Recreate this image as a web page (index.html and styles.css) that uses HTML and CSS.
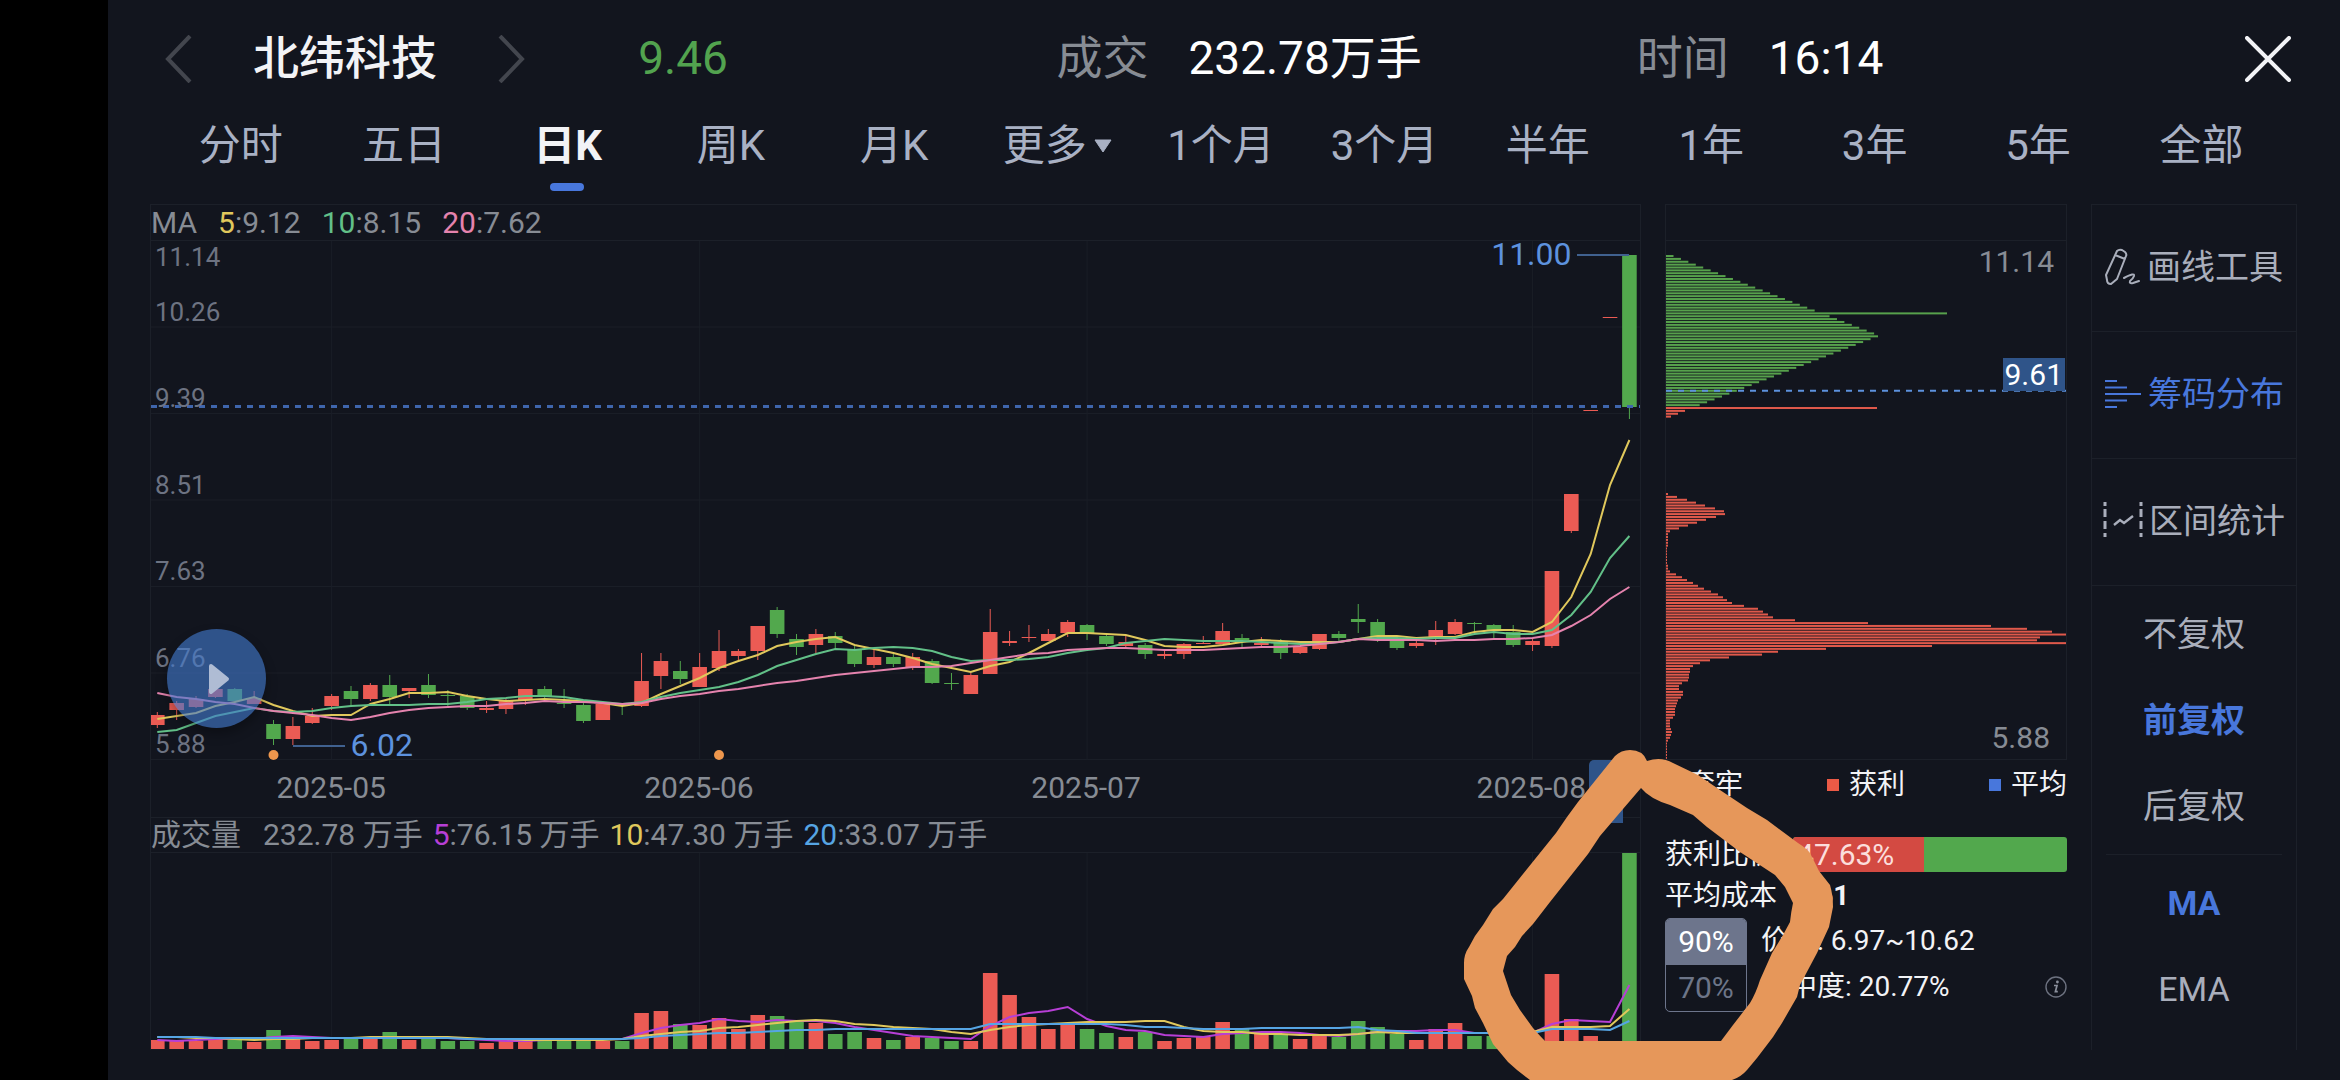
FILE: index.html
```html
<!DOCTYPE html>
<html lang="zh-CN">
<head>
  <meta charset="UTF-8">
  <title>北纬科技 日K</title>
  <link rel="stylesheet" href="styles.css">
</head>
<body>

<div class="app">
  <header class="topbar">
    <div class="stock">
      <button class="icon-btn" aria-label="上一只">
        <svg width="28" height="48" viewBox="0 0 28 48"><path d="M25 1 L3 24 L25 47" fill="none" stroke="#43464e" stroke-width="4"/></svg>
      </button>
      <h1>北纬科技</h1>
      <button class="icon-btn" aria-label="下一只">
        <svg width="28" height="48" viewBox="0 0 28 48"><path d="M3 1 L25 24 L3 47" fill="none" stroke="#43464e" stroke-width="4"/></svg>
      </button>
    </div>
    <div class="price">9.46</div>
    <div class="stat"><span>成交</span><b>232.78万手</b></div>
    <div class="stat"><span>时间</span><b>16:14</b></div>
    <button class="icon-btn" aria-label="关闭">
      <svg width="46" height="46" viewBox="0 0 46 46"><path d="M2 2 L44 44 M44 2 L2 44" fill="none" stroke="#f2f3f6" stroke-width="4" stroke-linecap="round"/></svg>
    </button>
  </header>

  <nav class="tabs">
    <button>分时</button>
    <button>五日</button>
    <button class="active">日K</button>
    <button>周K</button>
    <button>月K</button>
    <button>更多<svg width="20" height="14" viewBox="0 0 20 14"><path d="M2 1 H18 L10 13 Z" fill="#a9b1c4" stroke="#a9b1c4" stroke-linejoin="round"/></svg></button>
    <button>1个月</button>
    <button>3个月</button>
    <button>半年</button>
    <button>1年</button>
    <button>3年</button>
    <button>5年</button>
    <button>全部</button>
  </nav>

  <main class="workspace">
    <section class="chart">
      <div class="legend ma-legend">
        <span>MA</span>
        <span><i class="yellow">5</i>:9.12</span>
        <span><i class="green">10</i>:8.15</span>
        <span><i class="pink">20</i>:7.62</span>
      </div>
      <div class="plot">
        <svg id="kline" viewBox="0 0 1489 519" preserveAspectRatio="none"></svg>
        <div class="axis">
          <div><span>11.14</span><span>10.26</span></div>
          <div><span>9.39</span></div>
          <div><span>8.51</span></div>
          <div><span>7.63</span></div>
          <div><span>6.76</span></div>
          <div><span>5.88</span></div>
        </div>
        <span class="mark mark-high">11.00</span>
        <span class="mark mark-low">6.02</span>
        <button class="play" aria-label="播放">
          <svg width="22" height="32" viewBox="0 0 22 32"><path d="M3 3 L19 16 L3 29 Z" fill="#afbcd4" stroke="#afbcd4" stroke-width="4" stroke-linejoin="round"/></svg>
        </button>
      </div>
      <div class="dates">
        <span style="left: 12.1%">2025-05</span>
        <span style="left: 36.8%">2025-06</span>
        <span style="left: 62.8%">2025-07</span>
        <span style="left: 92.7%">2025-08</span>
        <div class="date-flag"></div>
      </div>
      <div class="legend vol-legend">
        <span class="vol-name">成交量</span>
        <span>232.78 万手</span>
        <span><i class="purple">5</i>:76.15 万手</span>
        <span><i class="yellow">10</i>:47.30 万手</span>
        <span><i class="sky">20</i>:33.07 万手</span>
      </div>
      <div class="plot vol-plot">
        <svg id="volume" viewBox="0 0 1489 196" preserveAspectRatio="none"></svg>
      </div>
    </section>

    <section class="chips">
      <div class="chip-box">
        <div class="chip-plot">
          <svg id="chip" viewBox="0 0 400 517" preserveAspectRatio="none"></svg>
          <span class="chip-top">11.14</span>
          <span class="chip-avg">9.61</span>
          <span class="chip-bottom">5.88</span>
        </div>
      </div>
      <div class="chip-legend">
        <span><i class="sw-green"></i>套牢</span>
        <span><i class="sw-red"></i>获利</span>
        <span><i class="sw-blue"></i>平均</span>
      </div>
      <div class="row profit">
        <span>获利比例</span>
        <div class="bar"><div class="bar-red" style="width: 47.63%">47.63%</div></div>
      </div>
      <div class="row"><span>平均成本</span><b>9.61</b></div>
      <div class="range">
        <div class="range-tabs">
          <button class="active">90%</button>
          <button>70%</button>
        </div>
        <div class="range-info">
          <p>价格: 6.97~10.62</p>
          <p>集中度: 20.77%
            <svg width="22" height="22" viewBox="0 0 22 22"><circle cx="11" cy="11" r="10" fill="none" stroke="#6d7280" stroke-width="1.4"/><circle cx="12.4" cy="6" r="1.4" fill="#8b909c"/><path d="M9 9.5 H12 L10.4 15.6 H12.8" fill="none" stroke="#8b909c" stroke-width="1.7"/></svg>
          </p>
        </div>
      </div>
    </section>

    <aside class="side">
      <button class="tool">
        <svg width="36" height="38" viewBox="0 0 36 38" fill="none" stroke="#a9aebb" stroke-width="2" stroke-linejoin="round" stroke-linecap="round"><path d="M12 3 Q14 1 17 2 L20 4 Q22 6 21 8 L12 31 L6 36 Q2 36 2 32 L1 27 Z M10 7 L20 11"/><path d="M19 30 Q30 24 29 28 Q28 31 25 33 Q24 36 28 35 L34 33"/></svg>
        画线工具
      </button>
      <button class="tool active">
        <svg width="38" height="30" viewBox="0 0 38 30" stroke="#4877dc" stroke-width="2"><path d="M1 2 H13 M1 8.5 H23 M1 15 H37 M1 21.5 H23 M1 28 H13"/></svg>
        筹码分布
      </button>
      <button class="tool">
        <svg width="40" height="38" viewBox="0 0 40 38" fill="none" stroke="#a9aebb" stroke-width="2"><path d="M2 0 V38 M38 0 V38" stroke-width="3" stroke-dasharray="4 3 8 4 8 4 4 3"/><path d="M11 23 L17 18 L21 21 L30 14" stroke-width="2.4"/></svg>
        区间统计
      </button>
      <div class="options">
        <button>不复权</button>
        <button class="active">前复权</button>
        <button>后复权</button>
      </div>
      <div class="options">
        <button class="active">MA</button>
        <button>EMA</button>
      </div>
    </aside>
  </main>

  <svg class="scribble" viewBox="1464 750 370 330">
    <path fill="#e6975a" fill-rule="evenodd" d="M1630 750 Q1621 750 1615 756 L1578 802 L1567 817 L1556 833 L1503 899 L1493 909 L1483 925 L1475 936 L1469 947 Q1464 954 1464 963 L1464 979 L1472 996 L1475 1008 L1483 1023 L1493 1044 L1508 1062 L1517 1070 L1530 1080 H1732 Q1741 1077 1747 1070 L1757 1058 L1773 1037 L1782 1023 L1797 997 L1800 985 L1817 953 L1829 927 L1833 907 Q1833 895 1830 885 L1819 871 L1810 853 Q1806 848 1798 843 L1767 820 L1747 808 L1720 790 L1698 775 L1673 763 Q1661 756 1647 761 Q1643 750 1630 750 Z
    M1641 788 L1623 809 L1600 836 L1588 854 L1550 902 L1533 924 L1522 936 L1515 947 L1507 956 L1503 971 L1507 983 L1511 995 L1520 1010 L1533 1028 Q1540 1036 1545 1041 H1721 L1733 1025 L1750 1003 Q1756 993 1760 980 L1772 953 L1783 935 L1790 922 Q1791 912 1793 903 L1785 887 L1775 875 L1740 852 L1707 827 L1693 815 L1670 805 Q1650 799 1641 788 Z"/>
  </svg>
</div>

<script src="chart.js"></script>
</body>
</html>
```

FILE: styles.css
```css
* {
  box-sizing: border-box;
}

body {
  margin: 0;
  background: #12151e;
  color: #f2f3f6;
  font-family: Roboto, "Noto Sans CJK SC", sans-serif;
  font-size: 28px;
  line-height: 1.2;
}

button {
  border: none;
  padding: 0;
  background: none;
  color: inherit;
  font: inherit;
  cursor: pointer;
}

svg {
  display: block;
}

i {
  font-style: normal;
}

.app {
  position: relative;
  min-height: 100vh;
  border-left: 108px solid #000;
  overflow: hidden;
}

/* top bar */
.topbar {
  display: grid;
  grid-template-columns: 473fr 418fr 580fr 608fr auto;
  align-items: center;
  height: 104px;
  padding: 14px 49px 0 57px;
  font-size: 46px;
}

.stock {
  display: flex;
  align-items: center;
  gap: 60px;
}

.stock h1 {
  margin: 0;
  font-size: 46px;
  font-weight: 500;
}

.price {
  color: #52a34f;
}

.stat {
  display: flex;
  gap: 40px;
  color: #878c94;
}

.stat b {
  color: #fff;
  font-weight: 400;
}

/* period tabs */
.tabs {
  display: flex;
  height: 84px;
  margin-bottom: 4px;
  padding: 0 57px 0 51px;
  color: #a9b1c4;
  font-size: 42px;
}

.tabs button {
  position: relative;
  display: flex;
  flex: 1;
  justify-content: center;
  align-items: center;
  gap: 6px;
}

.tabs .active {
  color: #f2f3f6;
  font-weight: 700;
}

.tabs .active::after {
  content: "";
  position: absolute;
  bottom: -3px;
  width: 34px;
  height: 8px;
  border-radius: 4px;
  background: #4877dc;
}

/* workspace */
.workspace {
  display: grid;
  grid-template-columns: 1491fr 402fr 206fr;
  gap: 24px;
  padding: 12px 43px 29px 42px;
}

.chart,
.chip-box,
.side {
  border: 1px solid #1c2029;
}

.chart {
  border-bottom-color: #161a22;
}

.legend {
  display: flex;
  align-items: center;
  height: 36px;
  color: #878c94;
  font-size: 30px;
  line-height: 36px;
  border-bottom: 1px solid #1c2029;
}

.ma-legend {
  gap: 21px;
}

.vol-legend {
  gap: 10px;
  border-top: 1px solid #1c2029;
}

.vol-name {
  margin-right: 12px;
}

.yellow { color: #e0c85c; }
.green { color: #62c088; }
.pink { color: #e583ae; }
.purple { color: #b73fd6; }
.sky { color: #56a5e4; }

.plot {
  position: relative;
  height: 519px;
}

.plot svg,
.chip-plot svg {
  width: 100%;
  height: 100%;
}

.vol-plot {
  height: 196px;
}

.axis {
  position: absolute;
  top: 0;
  bottom: 0;
  left: 4px;
  display: grid;
  grid-template-rows: repeat(6, 1fr);
  color: #6d7382;
  font-size: 26px;
  line-height: 32px;
}

.axis div {
  display: flex;
  flex-direction: column;
  justify-content: flex-end;
}

.axis div:first-child {
  justify-content: space-between;
}

.mark {
  position: absolute;
  color: #5d92de;
  font-size: 32px;
  line-height: 32px;
}

.mark-high {
  top: -3px;
  right: 4.6%;
}

.mark-low {
  bottom: -1px;
  left: 13.4%;
}

.plot .play {
  position: absolute;
  bottom: 32px;
  left: 16px;
  display: flex;
  justify-content: center;
  align-items: center;
  width: 99px;
  height: 99px;
  border-radius: 50%;
  background: rgba(66, 121, 205, 0.62);
  box-shadow: 0 6px 12px rgba(0, 0, 0, 0.3);
}

.plot .play svg {
  width: 22px;
  height: 32px;
  margin-left: 4px;
}

.dates {
  position: relative;
  height: 57px;
  color: #878c94;
  font-size: 30px;
  line-height: 55px;
}

.dates span {
  position: absolute;
  transform: translateX(-50%);
  white-space: nowrap;
}

.date-flag {
  position: absolute;
  top: 0;
  right: 17px;
  width: 34px;
  height: 63px;
  border-radius: 5px 0 0 0;
  background: #2f5489;
}

/* chip distribution */
.chip-box {
  padding-top: 35px;
}

.chip-plot {
  position: relative;
  height: 519px;
  border-top: 1px solid #1c2029;
}

.chip-top,
.chip-avg,
.chip-bottom {
  position: absolute;
  right: 12px;
  color: #878c94;
  font-size: 30px;
  line-height: 33px;
}

.chip-top {
  top: 4px;
}

.chip-bottom {
  right: 16px;
  bottom: 5px;
}

.chip-avg {
  top: 117px;
  right: 1px;
  padding: 0 2px;
  background: #2f5489;
  color: #fff;
}

.chip-legend {
  display: flex;
  justify-content: space-between;
  padding: 4px 0 28px;
  line-height: 42px;
}

.chip-legend span {
  display: flex;
  align-items: center;
  gap: 10px;
}

.chip-legend i {
  width: 12px;
  height: 12px;
}

.sw-green { background: #52a84d; }
.sw-red { background: #eb5a46; }
.sw-blue { background: #4877dc; }

.row {
  display: flex;
  align-items: center;
  gap: 16px;
  height: 41px;
}

.bar {
  flex: 1;
  height: 35px;
  border-radius: 3px;
  background: #52a84d;
  overflow: hidden;
}

.bar-red {
  height: 35px;
  padding-left: 4px;
  background: #d34a42;
  color: #fbdedc;
  font-size: 30px;
  line-height: 35px;
}

.range {
  display: flex;
  gap: 14px;
  margin-top: 2px;
}

.range-tabs {
  display: flex;
  flex-direction: column;
  width: 82px;
  border: 1px solid #6d758c;
  border-radius: 5px;
  overflow: hidden;
}

.range-tabs button {
  height: 46px;
  color: #6d7588;
  font-size: 30px;
}

.range-tabs .active {
  background: #6d758c;
  color: #fff;
}

.range-info {
  flex: 1;
}

.range-info p {
  display: flex;
  justify-content: space-between;
  align-items: center;
  height: 46px;
  margin: 0;
}

/* side tools */
.side {
  display: flex;
  flex-direction: column;
  border-bottom: none;
  color: #a9aebb;
  font-size: 34px;
}

.tool {
  display: flex;
  justify-content: center;
  align-items: center;
  gap: 6px;
  height: 127px;
  padding-bottom: 2px;
  border-bottom: 1px solid #1c2029;
  white-space: nowrap;
}

.side .active {
  color: #4877dc;
}

.options {
  display: flex;
  flex-direction: column;
  margin: 0 14px;
  padding: 5px 0;
}

.options + .options {
  border-top: 1px solid #1c2029;
}

.options button {
  height: 86px;
}

.options .active {
  font-weight: 700;
}

/* hand drawn ring */
.scribble {
  position: absolute;
  right: 506px;
  bottom: 0;
  width: 370px;
  height: 330px;
  pointer-events: none;
}
```

FILE: chart.js
```js
const RED = "#eb5b54";
const GREEN = "#52a84d";
const STEP = 19.37;
const cx = (i) => 6.3 + i * STEP;

// colour, high, body top, body bottom, low
const candles = [
  ["r",471,474,484,487],["r",460,462,469,479],["r",455,458,466,467],["r",445,448,456,457],["g",447,448,460,463],
  ["r",450,457,463,463],["g",479,483,498,504],["r",476,485,498,504],["r",467,475,482,483],["r",453,455,465,469],
  ["g",445,450,458,465],["r",442,444,458,460],["g",434,444,456,463],["r",447,447,450,457],["g",433,444,454,457],
  ["g",449,454,455,465],["g",453,455,467,469],["r",460,467,469,472],["r",458,460,468,473],["r",448,448,459,464],
  ["g",445,448,455,458],["g",448,462,463,467],["g",462,464,480,482],["r",463,463,479,479],["g",463,464,465,474],
  ["r",412,440,465,466],["r",412,420,435,448],["g",420,430,438,443],["r",412,426,446,446],["r",389,410,427,430],
  ["r",408,410,415,420],["r",385,385,410,419],["g",366,369,393,397],["g",393,398,406,414],["r",388,393,404,412],
  ["g",391,395,402,408],["g",405,408,423,426],["r",408,416,424,427],["g",412,416,423,426],["r",412,416,426,429],
  ["g",418,420,442,443],["g",432,442,443,449],["r",432,434,453,453],["r",368,391,433,433],["r",390,400,402,405],
  ["r",384,396,397,401],["r",388,393,400,400],["r",379,381,392,396],["g",383,384,392,399],["g",394,395,403,405],
  ["r",395,401,405,407],["g",402,404,413,418],["r",408,413,415,418],["r",402,403,413,418],["r",395,402,403,403],
  ["r",382,390,403,403],["g",393,397,399,407],["r",396,402,404,405],["g",398,401,412,418],["r",405,406,412,413],
  ["r",393,393,408,409],["g",390,393,397,400],["g",363,378,381,392],["g",378,381,396,401],["g",399,400,407,409],
  ["r",400,402,405,407],["r",380,389,397,404],["r",378,381,393,394],["g",381,382,383,390],["g",383,384,390,398],
  ["g",384,391,404,406],["r",398,400,404,410],["r",330,330,405,407],["r",253,253,290,292],["r",169,169,170,170],
  ["r",76,76,77,77],["g",14,14,166,178]
];

const ma5 = [478,475,472,465,461,456,464,470,475,474,474,463,458,452,452,451,455,458,460,459,458,459,460,462,465,462,
  453,445,437,427,420,414,405,401,398,396,404,408,412,417,423,427,431,425,421,412,402,392,392,393,394,399,
  405,406,406,404,401,399,400,401,401,401,398,395,395,397,396,396,391,389,389,391,381,356,313,244,199];
const ma10 = [491,489,482,475,471,467,470,471,470,467,465,464,464,464,463,463,461,458,457,455,455,456,459,461,463,461,
  456,452,449,446,441,434,425,419,413,408,409,407,406,407,410,416,420,419,419,418,416,412,409,407,402,400,
  398,399,400,400,400,401,402,403,403,401,398,397,397,398,397,397,393,391,393,393,389,374,351,317,295];
const ma20 = [452,456,458,461,463,467,470,472,474,477,479,476,472,469,467,466,465,465,463,462,460,461,461,462,463,462,
  458,455,453,450,448,445,442,440,437,434,432,430,428,426,426,425,422,419,416,413,412,409,408,407,407,408,
  409,409,409,408,407,406,406,405,403,401,398,399,399,399,400,399,399,398,398,397,394,385,374,358,346];

const vols = [9,8,8,9,10,7,19,11,8,9,11,10,17,9,11,8,8,6,8,8,9,9,10,8,8,36,38,25,24,31,20,34,33,29,26,15,17,11,9,12,11,8,8,
  76,54,32,20,24,20,16,12,17,8,11,12,27,20,15,14,10,13,12,28,22,15,9,20,26,13,13,12,12,75,30,13,8,196];
const vol5 = [187,188,187,186,186,186,184,183,184,185,185,185,184,185,185,185,186,187,188,188,187,187,187,186,186,180,
  175,172,170,166,168,169,167,168,168,170,174,177,180,183,184,185,186,173,164,160,158,154,166,173,177,178,
  182,183,184,181,180,179,179,180,182,183,181,179,178,178,177,177,180,180,180,180,171,167,168,169,132];
const vol10 = [184,184,185,185,186,187,186,186,185,185,185,184,184,184,184,184,185,186,186,187,187,187,187,187,186,183,
  181,179,178,175,174,172,170,168,167,168,171,172,174,175,176,179,181,177,174,172,171,170,169,169,169,168,
  168,174,178,179,179,181,181,182,182,182,181,179,180,180,180,180,180,180,180,179,174,174,174,173,156];
const vol20 = [184,184,184,185,185,185,185,185,185,185,185,185,185,185,185,185,186,186,186,186,186,186,186,186,186,185,
  183,182,181,180,180,179,178,177,177,176,176,176,176,176,176,176,176,171,171,171,171,171,171,171,172,174,
  174,175,176,176,176,175,175,175,175,175,174,177,178,180,180,180,180,180,180,180,176,176,176,177,168];

const months = [9, 28, 48, 71];

function rect(x, y, w, h, fill) {
  return `<rect x="${x}" y="${y}" width="${w}" height="${h}" fill="${fill}"/>`;
}

function line(x1, y1, x2, y2, color, w, extra = "") {
  return `<line x1="${x1}" y1="${y1}" x2="${x2}" y2="${y2}" stroke="${color}" stroke-width="${w}" ${extra}/>`;
}

function poly(ys, color) {
  const pts = ys.map((y, i) => cx(i).toFixed(1) + "," + y).join(" ");
  return `<polyline points="${pts}" fill="none" stroke="${color}" stroke-width="2"/>`;
}

function drawKline() {
  let s = "";
  for (let i = 1; i <= 6; i++) s += line(0, i * 86.5 - 0.5, 1489, i * 86.5 - 0.5, "#1a1e27", 1);
  months.forEach((m) => { s += line(cx(m), 0, cx(m), 519, "#1a1e27", 1); });
  candles.forEach(([c, hi, top, bot, lo], i) => {
    const color = c === "r" ? RED : GREEN;
    s += line(cx(i), hi, cx(i), lo, color, 1);
    s += rect(cx(i) - 7.3, top, 14.6, Math.max(1, bot - top), color);
  });
  s += poly(ma5, "#e0c85c") + poly(ma10, "#62c088") + poly(ma20, "#e583ae");
  s += line(0, 165.5, 1489, 165.5, "#3f66ad", 3, 'stroke-dasharray="6 6"');
  s += line(1426, 14, 1478, 14, "#40618f", 2) + line(142, 505, 194, 505, "#40618f", 2);
  [6, 29].forEach((i) => { s += `<circle cx="${cx(i)}" cy="514" r="5" fill="#ee974d"/>`; });
  document.getElementById("kline").innerHTML = s;
}

function drawVolume() {
  let s = "";
  months.forEach((m) => { s += line(cx(m), 0, cx(m), 196, "#1a1e27", 1); });
  vols.forEach((v, i) => {
    s += rect(cx(i) - 7.3, 196 - v, 14.6, v, candles[i][0] === "r" ? RED : GREEN);
  });
  s += poly(vol5, "#b73fd6") + poly(vol10, "#e0c85c") + poly(vol20, "#56a5e4");
  document.getElementById("volume").innerHTML = s;
}

function drawChip() {
  const rows = [];
  for (let k = 0; k < 28; k++) rows[k] = 7.5 + 7.43 * k;
  rows[20] = 281;
  for (let k = 28; k < 53; k++) rows[k] = 212 - 7.43 * (k - 28);
  [211, 19, 12, 5].forEach((w, i) => { rows[53 + i] = w; });
  [2,11,21,30,39,49,58,59,50,40,31,22,13,4,2,2,2,2,2,1,1,1,1,1,1,2,2,
   4,10,16,21,27,32,38,45,52,57,61,66,78,92,97,102,107,129,202,325,361,386,400,374,371,400,
   266,160,112,96,63,44,34,27,24,24,23,23,22,16,13,13,17,17,15,12,11,10,9,9,9,7,4,4,4,5,6,5,4,2,
   1,1,1,1,1,1].forEach((w, i) => { rows[83 + i] = w; });

  let s = "";
  rows.forEach((w, k) => {
    s += rect(0, (14 + k * 2.862).toFixed(2), w, 2, k < 53 ? "#57a14c" : "#e0594b");
  });
  s += line(0, 149.5, 400, 149.5, "#5d92de", 2, 'stroke-dasharray="6 6"');
  document.getElementById("chip").innerHTML = s;
}

drawKline();
drawVolume();
drawChip();
```
